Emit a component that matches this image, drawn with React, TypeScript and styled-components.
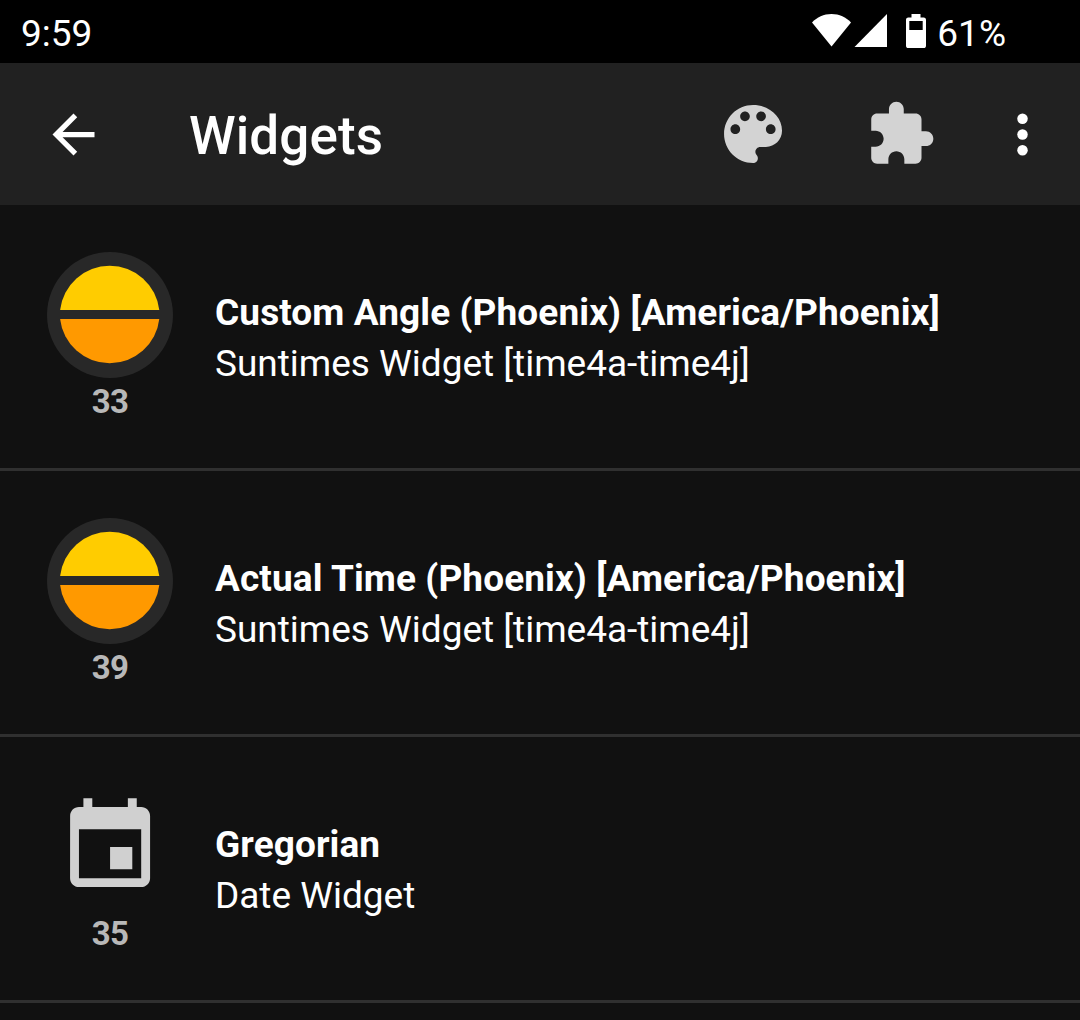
import React from 'react';
import styled, { createGlobalStyle } from 'styled-components';

const GlobalStyle = createGlobalStyle`
  html, body { margin: 0; padding: 0; background: #111111; }
  body { font-family: Roboto, "Liberation Sans", sans-serif; color: #ffffff; overflow: hidden; }
  * { box-sizing: border-box; }
  svg { display: block; flex: none; }
`;

const Screen = styled.div`
  width: 1080px;
  height: 1020px;
  display: flex;
  flex-direction: column;
  overflow: hidden;
  background: #111111;
`;

const StatusBar = styled.header`
  height: 63px;
  flex: none;
  display: flex;
  justify-content: space-between;
  padding: 0 74px 0 21px;
  background: #000000;
`;

const StatusText = styled.span`
  font-size: 37px;
  line-height: 44px;
  padding-top: 12px;
  white-space: nowrap;
`;

const StatusIcons = styled.div`
  display: flex;
  align-items: flex-start;
`;

const Toolbar = styled.nav`
  height: 142px;
  flex: none;
  display: flex;
  align-items: center;
  padding: 0 26px 0 42px;
  background: #212121;
`;

const Title = styled.h1`
  flex: 1;
  margin: 0;
  padding: 4px 0 0 84px;
  font-size: 53px;
  line-height: 62px;
  font-weight: 500;
  letter-spacing: 0.1px;
`;

const IconButton = styled.button<{ $gap?: number }>`
  display: flex;
  margin: 0 ${(p) => p.$gap ?? 0}px 0 0;
  padding: 0;
  border: 0;
  background: none;
`;

const List = styled.ul`
  margin: 0;
  padding: 0;
  list-style: none;
`;

const Row = styled.li`
  height: 266px;
  display: flex;
  align-items: flex-start;
  padding-left: 47px;
  border-bottom: 3px solid #303030;
`;

const Badge = styled.div`
  width: 126px;
  margin-top: 47px;
  display: flex;
  flex-direction: column;
  align-items: center;
`;

const Picture = styled.div`
  height: 126px;
  display: flex;
  align-items: center;
`;

const WidgetId = styled.span`
  font-size: 33px;
  line-height: 38px;
  margin-top: 5px;
  font-weight: 700;
  letter-spacing: -0.6px;
  color: #b8b8b8;
`;

const Labels = styled.div`
  display: flex;
  flex-direction: column;
  padding: 82px 0 0 42px;
`;

const Label = styled.span<{ $strong?: boolean }>`
  font-size: 37px;
  line-height: 51px;
  font-weight: ${(p) => (p.$strong ? 700 : 400)};
  letter-spacing: ${(p) => (p.$strong ? '0.1px' : '-0.02px')};
  white-space: nowrap;
`;

const StatusGlyphs = () => (
  <svg width="126" height="63" viewBox="811 0 126 63" fill="#ffffff">
    <path d="M812 22.6C817 17 823.7 14 831.5 14S846 17 851 22.6L831.5 46.5z" />
    <path d="M887 14v33h-32.5z" />
    <path
      fillRule="evenodd"
      d="M911.5 14h9v3.6h3.2c1.4 0 2.3.9 2.3 2.3v25.8c0 1.4-.9 2.3-2.3 2.3h-15.4c-1.4 0-2.3-.9-2.3-2.3V19.9c0-1.4.9-2.3 2.3-2.3h3.2zM909.3 21v9h13.4v-9z"
    />
  </svg>
);

const BackIcon = () => (
  <svg width="63" height="63" viewBox="0 0 24 24" fill="#ffffff">
    <path d="M20 11H7.83l5.59-5.59L12 4l-8 8 8 8 1.41-1.41L7.83 13H20v-2z" />
  </svg>
);

const PaletteIcon = () => (
  <svg width="77.3" height="77.3" viewBox="-0.12 -0.12 24 24" fill="#d3d3d3">
    <path d="M12 3c-4.97 0-9 4.03-9 9s4.03 9 9 9c.83 0 1.5-.67 1.5-1.5 0-.39-.15-.74-.39-1.01-.23-.26-.38-.61-.38-.99 0-.83.67-1.5 1.5-1.5H16c2.76 0 5-2.24 5-5 0-4.42-4.03-8-9-8zm-5.5 9c-.83 0-1.5-.67-1.5-1.5S5.67 9 6.5 9 8 9.67 8 10.5 7.33 12 6.5 12zm3-4C8.67 8 8 7.33 8 6.5S8.67 5 9.5 5s1.5.67 1.5 1.5S10.33 8 9.5 8zm5 0c-.83 0-1.5-.67-1.5-1.5S13.67 5 14.5 5s1.5.67 1.5 1.5S15.33 8 14.5 8zm3 4c-.83 0-1.5-.67-1.5-1.5S16.67 9 17.5 9s1.5.67 1.5 1.5-.67 1.5-1.5 1.5z" />
  </svg>
);

const ExtensionIcon = () => (
  <svg width="71" height="71" viewBox="-0.1 0.1 24 24" fill="#d3d3d3">
    <path d="M20.5 11H19V7c0-1.1-.9-2-2-2h-4V3.5C13 2.12 11.88 1 10.5 1S8 2.12 8 3.5V5H4c-1.1 0-1.99.9-1.99 2v3.8H3.5c1.49 0 2.7 1.21 2.7 2.7s-1.21 2.7-2.7 2.7H2V20c0 1.1.9 2 2 2h3.8v-1.5c0-1.49 1.21-2.7 2.7-2.7 1.49 0 2.7 1.21 2.7 2.7V22H17c1.1 0 2-.9 2-2v-4h1.5c1.38 0 2.5-1.12 2.5-2.5S21.88 11 20.5 11z" />
  </svg>
);

const MoreIcon = () => (
  <svg width="63" height="63" viewBox="0 0 24 24" fill="#ffffff">
    <circle cx="12" cy="6" r="2" />
    <circle cx="12" cy="12" r="2" />
    <circle cx="12" cy="18" r="2" />
  </svg>
);

const SunIcon = () => (
  <svg width="126" height="126" viewBox="0 0 126 126">
    <circle cx="63" cy="63" r="63" fill="#282828" />
    <path d="M13.1 58A49.92 49.92 0 0 1 112.3 58z" fill="#ffcc00" />
    <path d="M13.1 67A49.92 49.92 0 0 0 112.3 67z" fill="#ff9900" />
  </svg>
);

const CalendarIcon = () => (
  <svg width="106.7" height="106.7" viewBox="0.06 0.06 24 24" fill="#d0d0d0">
    <path d="M17 12h-5v5h5v-5zM16 1v2H8V1H6v2H5c-1.11 0-1.99.9-1.99 2L3 19c0 1.1.89 2 2 2h14c1.1 0 2-.9 2-2V5c0-1.1-.9-2-2-2h-1V1h-2zm3 18H5V8h14v11z" />
  </svg>
);

const widgets = [
  { id: 33, icon: <SunIcon />, title: 'Custom Angle (Phoenix) [America/Phoenix]', kind: 'Suntimes Widget [time4a-time4j]' },
  { id: 39, icon: <SunIcon />, title: 'Actual Time (Phoenix) [America/Phoenix]', kind: 'Suntimes Widget [time4a-time4j]' },
  { id: 35, icon: <CalendarIcon />, title: 'Gregorian', kind: 'Date Widget' },
];

export default function App() {
  return (
    <Screen>
      <GlobalStyle />
      <StatusBar>
        <StatusText>9:59</StatusText>
        <StatusIcons>
          <StatusGlyphs />
          <StatusText>61%</StatusText>
        </StatusIcons>
      </StatusBar>
      <Toolbar>
        <IconButton aria-label="Back"><BackIcon /></IconButton>
        <Title>Widgets</Title>
        <IconButton aria-label="Themes" $gap={73.7}><PaletteIcon /></IconButton>
        <IconButton aria-label="Extensions" $gap={55}><ExtensionIcon /></IconButton>
        <IconButton aria-label="More options"><MoreIcon /></IconButton>
      </Toolbar>
      <List>
        {widgets.map((w) => (
          <Row key={w.id}>
            <Badge>
              <Picture>{w.icon}</Picture>
              <WidgetId>{w.id}</WidgetId>
            </Badge>
            <Labels>
              <Label $strong>{w.title}</Label>
              <Label>{w.kind}</Label>
            </Labels>
          </Row>
        ))}
      </List>
    </Screen>
  );
}
